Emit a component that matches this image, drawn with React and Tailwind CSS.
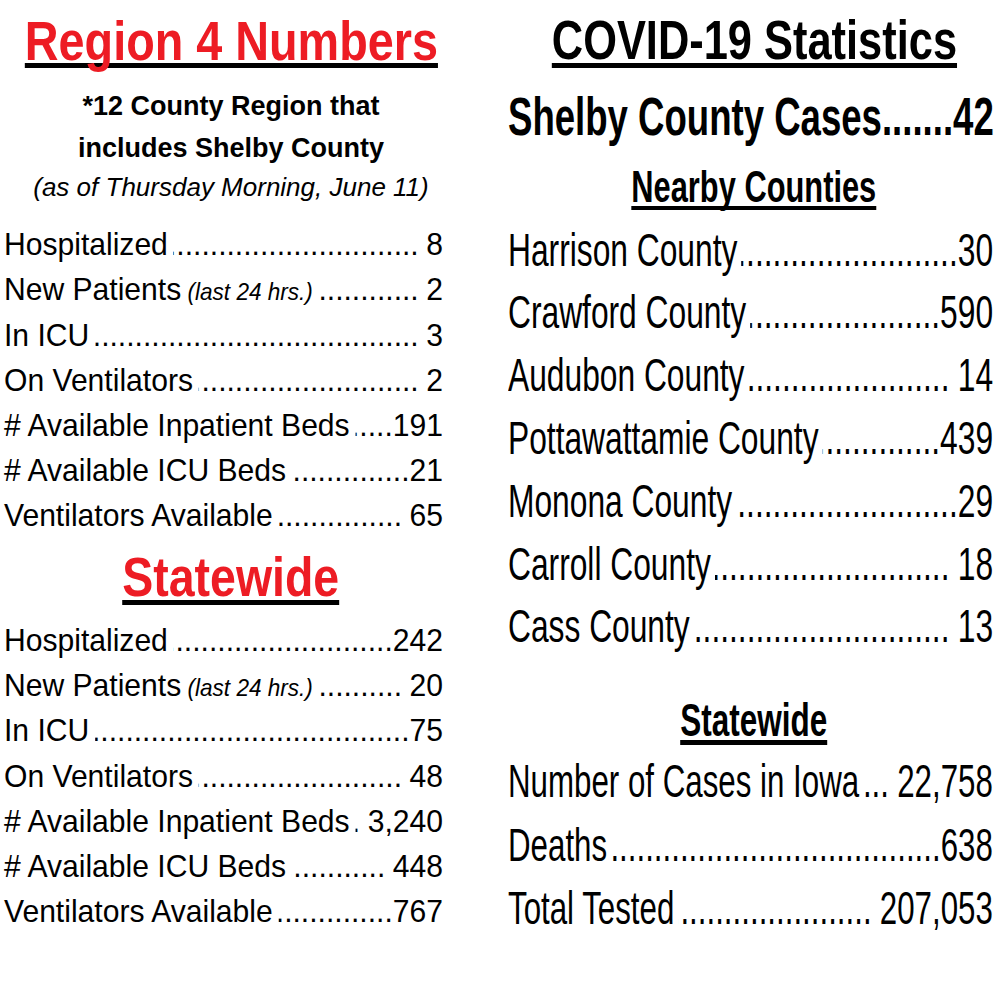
import React from "react";
import clsx from "clsx";

const DOTS = ".".repeat(160);

const regionRows = [
  { label: "Hospitalized", value: "8", gap: true },
  { label: "New Patients", note: "(last 24 hrs.)", value: "2", gap: true },
  { label: "In ICU", value: "3", gap: true },
  { label: "On Ventilators", value: "2", gap: true },
  { label: "# Available Inpatient Beds", value: "191" },
  { label: "# Available ICU Beds", value: "21" },
  { label: "Ventilators Available", value: "65", gap: true },
];

const stateRows = [
  { label: "Hospitalized", value: "242" },
  { label: "New Patients", note: "(last 24 hrs.)", value: "20", gap: true },
  { label: "In ICU", value: "75" },
  { label: "On Ventilators", value: "48", gap: true },
  { label: "# Available Inpatient Beds", value: "3,240", gap: true },
  { label: "# Available ICU Beds", value: "448", gap: true },
  { label: "Ventilators Available", value: "767" },
];

const countyRows = [
  { label: "Harrison County", value: "30" },
  { label: "Crawford County", value: "590" },
  { label: "Audubon County", value: "14", gap: true },
  { label: "Pottawattamie County", value: "439" },
  { label: "Monona County", value: "29" },
  { label: "Carroll County", value: "18", gap: true },
  { label: "Cass County", value: "13", gap: true },
];

const iowaRows = [
  { label: "Number of Cases in Iowa", value: "22,758", gap: true },
  { label: "Deaths", value: "638" },
  { label: "Total Tested", value: "207,053", gap: true },
];

// fila con puntos guía: etiqueta ....... valor
function Row({ label, note, value, gap, wide }) {
  return (
    <div className="flex whitespace-nowrap">
      <span>
        {label}
        {note && <span className="italic text-[24px] leading-none"> {note}</span>}
      </span>
      <span className="flex-1 min-w-0 overflow-hidden flex justify-end ml-[6px]">
        <span className="shrink-0">{DOTS}</span>
      </span>
      <span className={clsx(gap && (wide ? "pl-[12px]" : "pl-[8px]"))}>{value}</span>
    </div>
  );
}

export default function App() {
  return (
    <div className="w-[1000px] h-[1000px] overflow-hidden bg-white text-black flex font-['Liberation_Sans',Arial,sans-serif]">
      {/* Columna izquierda: Region 4 */}
      <div className="w-[462px] shrink-0 overflow-hidden">
        <div className="mt-[8.6px] h-[64px] flex justify-center">
          <span className="shrink-0 whitespace-nowrap text-[56px] leading-[64px] font-bold text-[#ed1c24] underline decoration-black decoration-[5px] underline-offset-[3px] [text-decoration-skip-ink:none] scale-x-[0.835]">
            Region 4 Numbers
          </span>
        </div>
        <div className="mt-[12px] text-center font-bold text-[27px] leading-[42px]">
          <div>*12 County Region that</div>
          <div>includes Shelby County</div>
        </div>
        <div className="text-center italic text-[26px] leading-[36px]">
          (as of Thursday Morning, June 11)
        </div>

        <div className="mt-[17.7px] ml-[4px] w-[467px] origin-left scale-x-[0.94] text-[32px] leading-[45.17px]">
          {regionRows.map((r) => (
            <Row key={r.label} {...r} />
          ))}
        </div>

        <div className="mt-[8.9px] h-[60px] flex justify-center">
          <span className="shrink-0 whitespace-nowrap text-[56px] leading-[60px] font-bold text-[#ed1c24] underline decoration-black decoration-[5px] underline-offset-[4px] [text-decoration-skip-ink:none] scale-x-[0.83]">
            Statewide
          </span>
        </div>

        <div className="mt-[10.7px] ml-[4px] w-[467px] origin-left scale-x-[0.94] text-[32px] leading-[45.17px]">
          {stateRows.map((r) => (
            <Row key={r.label} {...r} />
          ))}
        </div>
      </div>

      {/* Columna derecha: COVID-19 */}
      <div className="ml-[46px] w-[492px] shrink-0 overflow-hidden">
        <div className="mt-[7.6px] h-[64px] flex justify-center">
          <span className="shrink-0 whitespace-nowrap text-[56px] leading-[64px] font-bold underline decoration-[5px] underline-offset-[4px] [text-decoration-skip-ink:none] scale-x-[0.775]">
            COVID-19 Statistics
          </span>
        </div>

        <div className="mt-[17px] h-[56px] whitespace-nowrap text-[53px] leading-[56px] font-bold origin-left scale-x-[0.69]">
          Shelby County Cases.......42
        </div>

        <div className="mt-[18px] h-[48px] flex justify-center">
          <span className="shrink-0 whitespace-nowrap text-[45px] leading-[48px] font-bold underline decoration-[4px] underline-offset-[4px] [text-decoration-skip-ink:none] scale-x-[0.685]">
            Nearby Counties
          </span>
        </div>

        <div className="mt-[8.1px] w-[703px] origin-left scale-x-[0.69] text-[46px] leading-[62.8px]">
          {countyRows.map((r) => (
            <Row key={r.label} {...r} wide />
          ))}
        </div>

        <div className="mt-[37px] h-[50px] flex justify-center">
          <span className="shrink-0 whitespace-nowrap text-[47px] leading-[50px] font-bold underline decoration-[5px] underline-offset-[4px] [text-decoration-skip-ink:none] scale-x-[0.67]">
            Statewide
          </span>
        </div>

        <div className="mt-[5px] w-[713px] origin-left scale-x-[0.68] text-[46px] leading-[63.5px]">
          {iowaRows.map((r) => (
            <Row key={r.label} {...r} wide />
          ))}
        </div>
      </div>
    </div>
  );
}
